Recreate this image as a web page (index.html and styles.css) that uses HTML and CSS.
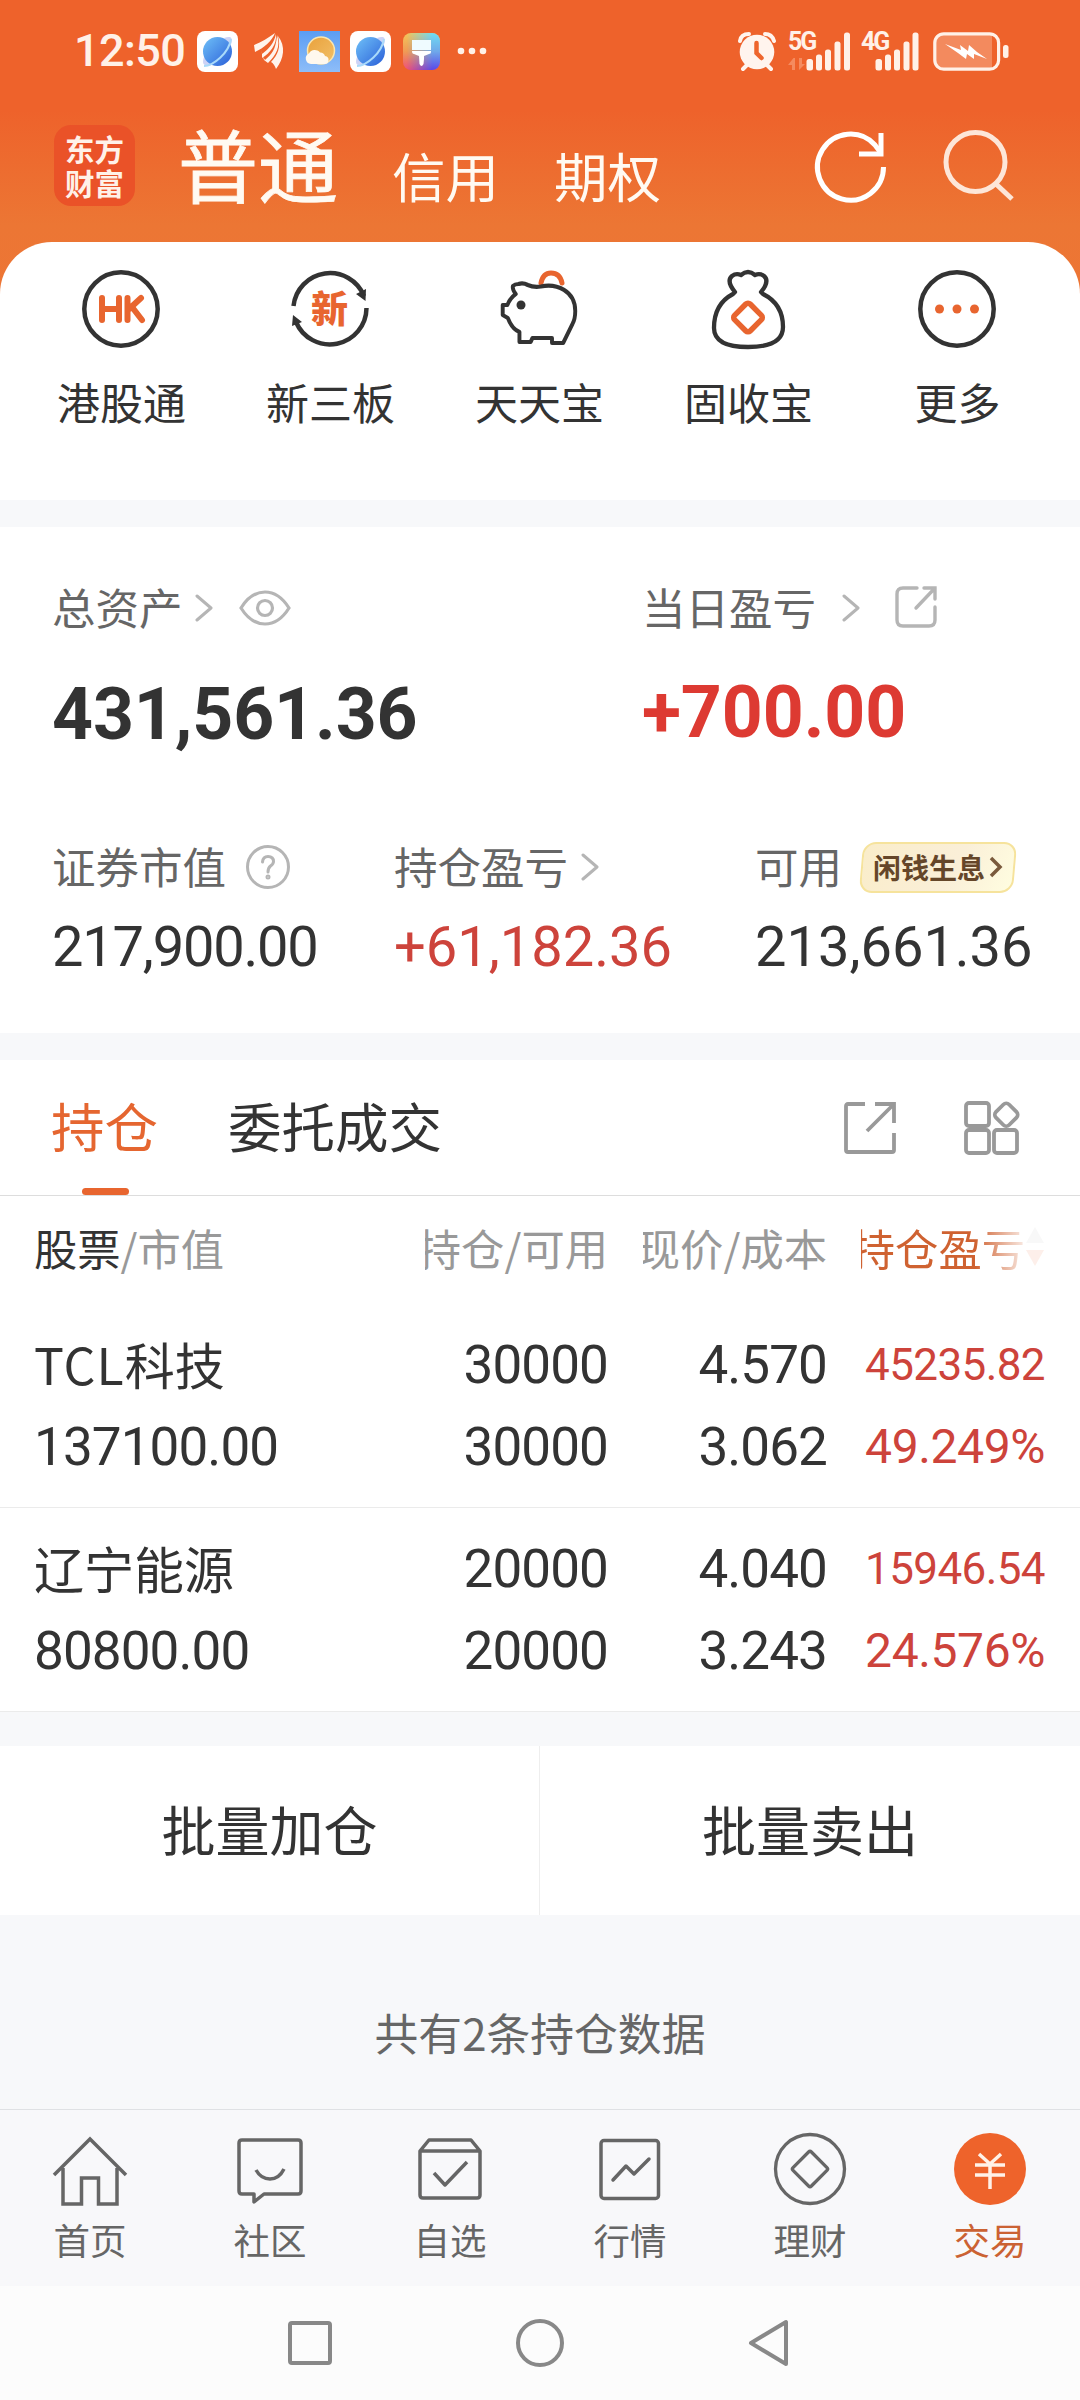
FILE: index.html
```html
<!DOCTYPE html>
<html lang="zh-CN">
<head>
<meta charset="utf-8">
<title>交易</title>
<link rel="stylesheet" href="styles.css">
</head>
<body>
<svg width="0" height="0" class="defs">
  <defs>
    <linearGradient id="ball" x1="0" y1="0" x2="1" y2="1"><stop offset="0" stop-color="#6fc0f8"/><stop offset="1" stop-color="#2a5fd8"/></linearGradient>
    <linearGradient id="sky" x1="0" y1="0" x2="0" y2="1"><stop offset="0" stop-color="#5b9df3"/><stop offset="1" stop-color="#8ebdf8"/></linearGradient>
    <linearGradient id="sun" x1="0" y1="0" x2="1" y2="1"><stop offset="0" stop-color="#e9a13b"/><stop offset="1" stop-color="#f2c069"/></linearGradient>
    <linearGradient id="coolside" x1="0" y1="0" x2="0" y2="1"><stop offset="0" stop-color="#6fdcf2"/><stop offset="0.5" stop-color="#6fa8ea"/><stop offset="1" stop-color="#5a48e8"/></linearGradient>
    <linearGradient id="warmside" x1="0" y1="0" x2="0" y2="1"><stop offset="0" stop-color="#f3c65a"/><stop offset="0.5" stop-color="#f09a55"/><stop offset="1" stop-color="#ec4f7c"/></linearGradient>
    <linearGradient id="fadein" x1="0" y1="0" x2="1" y2="0"><stop offset="0.1" stop-color="#fff" stop-opacity="0"/><stop offset="0.8" stop-color="#fff"/></linearGradient>
    <mask id="sidemask"><rect width="37" height="37" fill="url(#fadein)"/></mask>
    <symbol id="planet" viewBox="0 0 41 41">
      <rect width="41" height="41" rx="8" fill="#fff"/>
      <path d="M27 7C33 5 36 6 34.500 12L32 18zM7 26C4.500 33 7 36 14 34L18 32z" fill="#cdd3f6"/>
      <circle cx="20.500" cy="20.500" r="14.500" fill="url(#ball)"/>
      <path d="M7 35C16 35 32 22 34 8" fill="none" stroke="#a9dafa" stroke-width="2"/>
    </symbol>
    <symbol id="chevron" viewBox="0 0 18 28"><path d="M2 2L16 14L2 26" fill="none" stroke="#b5b5b5" stroke-width="3" stroke-linecap="round" stroke-linejoin="round"/></symbol>
  </defs>
</svg>
<div class="screen">
  <header class="top">
    <div class="status">
      <span class="clock">12:50</span>
      <svg class="app1" width="41" height="41"><use href="#planet"/></svg>
      <svg class="app2" width="30" height="36" viewBox="0 0 30 36" fill="#fff4ec"><path d="M0 12C8 9 14 5 21 0C18 8 10 15 1 19z"/><path d="M22 1C23 12 16 20 8 25L8 21C15 16 20 10 22 1z"/><path d="M7 17C9 22 9 25 11 27C17 22 22 17 23 2C27 14 22 22 14 30L10 27z"/><path d="M24 3C32 13 30 26 22 36C21 33 19 30 17 29C24 22 27 14 24 3z"/></svg>
      <svg class="app3" width="41" height="41" viewBox="0 0 41 41"><rect width="41" height="41" fill="url(#sky)"/><circle cx="22" cy="19.500" r="13.500" fill="url(#sun)" stroke="#fbe6ae" stroke-width="1.500"/><path d="M12 33a5.500 5.500 0 0 1-2-10.500a6.500 6.500 0 0 1 11-1a5 5 0 0 1 5 3.500a4 4 0 0 1-1 8z" fill="#fff8ee"/></svg>
      <svg class="app4" width="41" height="41"><use href="#planet"/></svg>
      <svg class="app5" width="37" height="37" viewBox="0 0 37 37"><rect width="37" height="37" rx="8" fill="url(#warmside)"/><rect width="37" height="37" rx="8" fill="url(#coolside)" mask="url(#sidemask)"/><path d="M9 7H28V17H9z" fill="#effbff"/><path d="M9 18H28V19Q28 21 26 21L21 23V26L20.500 31Q18.500 35 16.500 31L16 23L11 21Q9 21 9 18z" fill="#fff"/></svg>
      <svg class="more" width="30" height="8" viewBox="0 0 30 8" fill="#fff1e8"><circle cx="4" cy="4" r="3.300"/><circle cx="15" cy="4" r="3.300"/><circle cx="26" cy="4" r="3.300"/></svg>
      <svg class="alarm" width="38" height="39" viewBox="0 0 38 39"><circle cx="19" cy="20" r="17.300" fill="#fff4ee"/><path d="M2 9Q3 2 11 2M27 2Q34 2 36 9M9 33L5 37M29 33L33 37" stroke="#fff4ee" stroke-width="4" fill="none" stroke-linecap="round"/><path d="M18.500 11V21L23.500 26" fill="none" stroke="#ee652d" stroke-width="4.500" stroke-linecap="round"/></svg>
      <div class="signal"><span>5G</span><svg width="62" height="39" viewBox="0 0 62 39"><path d="M5.500 26L0 33H4V38H7V26zM11 26V38L17 32H14V26z" fill="#f58b5f"/><g fill="#fff1e8"><rect x="18.500" y="27" width="6.500" height="11.500" rx="2.500"/><rect x="28" y="22.500" width="6" height="16" rx="2.500"/><rect x="37" y="17.500" width="6" height="21" rx="2.500"/><rect x="46.500" y="9.500" width="6" height="29" rx="2.500"/><rect x="56" y="0.500" width="6" height="38" rx="2.500"/></g></svg></div>
      <div class="signal second"><span>4G</span><svg width="62" height="39" viewBox="0 0 62 39"><g fill="#fff1e8"><rect x="18.500" y="27" width="6.500" height="11.500" rx="2.500"/><rect x="28" y="22.500" width="6" height="16" rx="2.500"/><rect x="37" y="17.500" width="6" height="21" rx="2.500"/><rect x="46.500" y="9.500" width="6" height="29" rx="2.500"/><rect x="55.500" y="0.500" width="6" height="38" rx="2.500"/></g></svg></div>
      <svg class="battery" width="76" height="39" viewBox="0 0 76 39"><path d="M10 3H59V36H10Q3 36 3 29V10Q3 3 10 3z" fill="#f38a5e"/><rect x="1.800" y="1.800" width="63.800" height="35.400" rx="9" fill="none" stroke="#fff1e8" stroke-width="3.200"/><rect x="70" y="13" width="5.500" height="13" rx="2.500" fill="#fff1e8"/><path d="M12 12L28 18L27 13L35 19L36 13L44 20L54 27L41 22L41 27L34 22L33 27L25 21z" fill="#fff"/></svg>
    </div>
    <div class="titlebar">
      <div class="logo"><span>东方</span><span>财富</span></div>
      <span class="mode on">普通</span>
      <span class="mode credit">信用</span>
      <span class="mode option">期权</span>
      <svg class="refresh" width="74" height="76" viewBox="0 0 74 76" fill="none" stroke="#fff" stroke-width="5"><path d="M69.500 38A33 33 0 1 1 61 16L67 24"/><path d="M67 4V25H45"/></svg>
      <svg class="search" width="72" height="74" viewBox="0 0 72 74" fill="none" stroke="#fde6d8" stroke-width="5"><circle cx="33.500" cy="33" r="29.500"/><path d="M54 55L70 70"/></svg>
    </div>
  </header>

  <section class="shortcuts">
    <div class="shortcut"><svg width="78" height="80" viewBox="0 0 78 80"><ellipse cx="39" cy="40" rx="36.700" ry="36.700" fill="none" stroke="#333" stroke-width="4.500"/><path d="M20 29V51M37 29V51M20 40H37M45.500 29V51M59 29L46 41M50 38L60 51" stroke="#e8652f" stroke-width="6" stroke-linecap="round" fill="none"/></svg><span>港股通</span></div>
    <div class="shortcut"><div class="ring"><svg width="78" height="80" viewBox="0 0 78 80"><g fill="none" stroke="#333" stroke-width="4.500"><path d="M2.500 37A36.700 36.700 0 0 1 73 27"/><path d="M75.500 39A36.700 36.700 0 0 1 5 53"/></g><path d="M65 25L75 20L74.500 32zM1 57L2 46L11 53z" fill="#333"/></svg><b>新</b></div><span>新三板</span></div>
    <div class="shortcut"><svg width="78" height="80" viewBox="0 0 78 80" fill="none" stroke-linejoin="round"><path d="M41 14Q43 4 51 4Q60 4 62 14" stroke="#e8652f" stroke-width="5" stroke-linecap="round"/><path d="M14 15Q19 13.500 24 16Q30 18.500 38 17.500C55 14 75 22 75 42Q75 50 72 55L62 74H50V69H29L27 73H15V63Q7 60 2.500 49L-3 46V36H2Q5 29 11 25Q7 20 8 17Q10 15 14 15z" transform="matrix(.93 0 0 1 5.500 0)" stroke="#333" stroke-width="4.200"/><circle cx="21" cy="36" r="4.500" fill="#333"/></svg><span>天天宝</span></div>
    <div class="shortcut"><svg width="78" height="80" viewBox="0 0 78 80" fill="none" stroke-linejoin="round"><path d="M26 22Q17 11 23 6Q27 3 32 5Q39 -1 46 5Q51 3 55 6Q61 11 52 22L54 24Q74 34 74 57Q74 77 39 77Q5 77 5 58Q5 34 24 24z" transform="translate(0 1)" stroke="#333" stroke-width="4.300"/><rect x="28" y="37.500" width="22" height="22" rx="3" transform="rotate(45 39 48.500)" stroke="#e8652f" stroke-width="5.500"/></svg><span>固收宝</span></div>
    <div class="shortcut"><svg width="78" height="80" viewBox="0 0 78 80"><circle cx="39" cy="40" r="36.700" fill="none" stroke="#333" stroke-width="4.500"/><g fill="#e8652f"><circle cx="21.500" cy="40" r="4.500"/><circle cx="39" cy="40" r="4.500"/><circle cx="56.500" cy="40" r="4.500"/></g></svg><span>更多</span></div>
  </section>

  <section class="assets">
    <div class="pair">
      <div>
        <div class="label"><span>总资产</span><svg class="arr a1" width="18" height="28"><use href="#chevron"/></svg><svg class="eye" width="52" height="36" viewBox="0 0 52 36" fill="none" stroke="#b5b5b5" stroke-width="3.200"><path d="M2 18Q12 2 26 2Q40 2 50 18Q40 34 26 34Q12 34 2 18z"/><circle cx="26" cy="18" r="7.500"/></svg></div>
        <div class="total">431,561.36</div>
      </div>
      <div>
        <div class="label"><span>当日盈亏</span><svg class="arr a2" width="18" height="28"><use href="#chevron"/></svg><svg class="share" width="42" height="42" viewBox="0 0 42 42" fill="none" stroke="#b5b5b5" stroke-width="3.400" stroke-linecap="round"><path d="M22 2H8Q2 2 2 8V34Q2 40 8 40H34Q40 40 40 34V21M29 2H40V13M40 2L21 22"/></svg></div>
        <div class="total daily">+700.00</div>
      </div>
    </div>
    <div class="trio">
      <div>
        <div class="label"><span>证券市值</span><svg class="help" width="44" height="46" viewBox="0 0 44 46" fill="none" stroke="#b5b5b5" stroke-width="3"><circle cx="22" cy="23" r="20.500"/><path d="M16.500 18Q17 12.500 22 12.500Q27.500 12.500 27.500 17.500Q27.500 20 24.500 22Q22 24 22 28" stroke-linecap="round"/><circle cx="22" cy="33" r="1" /></svg></div>
        <div class="num n1">217,900.00</div>
      </div>
      <div>
        <div class="label"><span>持仓盈亏</span><svg class="arr a3" width="18" height="28"><use href="#chevron"/></svg></div>
        <div class="num n2 red">+61,182.36</div>
      </div>
      <div>
        <div class="label"><span>可用</span><div class="badge"><span>闲钱生息</span><svg width="14" height="20" viewBox="0 0 14 20" fill="none" stroke="#7a5a3c" stroke-width="3.500"><path d="M2 1L11 10L2 19"/></svg></div></div>
        <div class="num n3">213,661.36</div>
      </div>
    </div>
  </section>

  <section class="holdings">
    <div class="tabs">
      <div class="tab active">持仓</div>
      <div class="tab">委托成交</div>
      <svg class="export" width="52" height="52" viewBox="0 0 52 52" fill="none" stroke="#999" stroke-width="3.800"><path d="M21 2H4Q2 2 2 4V48Q2 50 4 50H48Q50 50 50 48V31M31 2H50V21M49 3L23 29"/></svg>
      <svg class="grid" width="58" height="56" viewBox="0 0 58 56" fill="none" stroke="#999" stroke-width="3.800"><rect x="3" y="3" width="23" height="23" rx="3"/><rect x="3" y="30" width="23" height="23" rx="3"/><rect x="31" y="30" width="23" height="23" rx="3"/><rect x="34" y="5.500" width="18.500" height="18.500" rx="4" transform="rotate(45 43.250 14.750)"/></svg>
    </div>
    <div class="row head">
      <div class="hc first"><b>股票</b><span>/市值</span></div>
      <div class="hc"><span>持仓/可用</span></div>
      <div class="hc"><span>现价/成本</span></div>
      <div class="hc sort"><span>持仓盈亏</span><svg width="20" height="40" viewBox="0 0 20 40"><path d="M10 0L19 16H1z" fill="#bbb"/><path d="M10 39L19 23H1z" fill="#e8652f"/></svg></div>
    </div>
    <div class="row item">
      <div class="first"><div class="name"><span class="latin">TCL</span>科技</div><div class="v">137100.00</div></div>
      <div><div class="v">30000</div><div class="v">30000</div></div>
      <div><div class="v">4.570</div><div class="v">3.062</div></div>
      <div class="red"><div class="p">45235.82</div><div class="q">49.249%</div></div>
    </div>
    <div class="row item">
      <div class="first"><div class="name">辽宁能源</div><div class="v">80800.00</div></div>
      <div><div class="v">20000</div><div class="v">20000</div></div>
      <div><div class="v">4.040</div><div class="v">3.243</div></div>
      <div class="red"><div class="p">15946.54</div><div class="q">24.576%</div></div>
    </div>
  </section>

  <section class="batch"><div>批量加仓</div><div>批量卖出</div></section>
  <div class="count">共有2条持仓数据</div>

  <nav class="bottom">
    <div><svg width="76" height="80" viewBox="0 0 76 80" fill="none" stroke="#666" stroke-width="3.500"><path d="M2 44L38 8L74 44M11 37V73H29.500V47H46.500V73H65V37"/></svg><span>首页</span></div>
    <div><svg width="76" height="80" viewBox="0 0 76 80" fill="none" stroke="#666" stroke-width="3.500" stroke-linejoin="round"><path d="M10 9H66Q69 9 69 12V60Q69 63 66 63H32L22 71V63H10Q7 63 7 60V12Q7 9 10 9z"/><path d="M24 39Q29 48 38 48Q47 48 52 38"/></svg><span>社区</span></div>
    <div><svg width="76" height="80" viewBox="0 0 76 80" fill="none" stroke="#666" stroke-width="3.500" stroke-linejoin="round"><path d="M8 20L17 9H59L68 20V64Q68 67 65 67H11Q8 67 8 64zM8 20H68"/><path d="M22 42L33 54L55 31"/></svg><span>自选</span></div>
    <div><svg width="76" height="80" viewBox="0 0 76 80" fill="none" stroke="#666" stroke-width="3.500" stroke-linejoin="round"><rect x="9" y="9.500" width="57.500" height="58" rx="3"/><path d="M21 49L34 35L42 43L57 28" stroke-linecap="round"/></svg><span>行情</span></div>
    <div><svg width="76" height="80" viewBox="0 0 76 80" fill="none" stroke="#666" stroke-width="3.300"><circle cx="38" cy="38" r="34.500"/><rect x="25" y="25" width="26" height="26" rx="2" transform="rotate(45 38 38)"/></svg><span>理财</span></div>
    <div class="now"><svg width="76" height="80" viewBox="0 0 76 80" fill="none" stroke="#fff1e8" stroke-width="3.500"><circle cx="38" cy="38" r="36" fill="#ee632b" stroke="none"/><path d="M27 23L38 33L49 23M23 34H53M23 44H53M38 32V58"/></svg><span>交易</span></div>
  </nav>
  <div class="sysnav">
    <svg width="46" height="48" viewBox="0 0 46 48"><rect x="3" y="4" width="40" height="40" rx="2" fill="none" stroke="#888" stroke-width="4"/></svg>
    <svg width="50" height="50" viewBox="0 0 50 50"><circle cx="25" cy="25" r="22" fill="none" stroke="#888" stroke-width="4"/></svg>
    <svg width="46" height="50" viewBox="0 0 46 50"><path d="M4 25L39 4V46z" fill="none" stroke="#888" stroke-width="4" stroke-linejoin="round"/></svg>
  </div>
</div>
</body>
</html>
```
FILE: styles.css
```css
* { box-sizing: border-box; margin: 0; padding: 0; }
body { width: 1080px; background: #f7f8fa; color: #333; font-family: "Noto Sans CJK SC", sans-serif; }
svg { display: block; flex: none; overflow: visible; }
.defs { position: absolute; }
.screen { width: 1080px; height: 2400px; display: flex; flex-direction: column; overflow: hidden; }
.screen > * { flex: none; }

.top { height: 302px; background: linear-gradient(#ee622b 0, #ee622b 110px, #ec7634 225px, #ed7535 302px); }
.status { height: 102px; padding-left: 74px; display: flex; align-items: center; }
.clock { width: 114px; font: 500 45px/60px Roboto, sans-serif; color: #fff1e8; letter-spacing: -0.6px; }
.app1 { margin-left: 9px; }
.app2 { margin-left: 16px; }
.app3 { margin-left: 15px; }
.app4 { margin-left: 10px; }
.app5 { margin-left: 12px; }
.more { margin-left: 17px; }
.alarm { margin-left: 251px; }
.signal { position: relative; width: 62px; margin-left: 12px; }
.signal.second { margin-left: 7px; }
.signal span { position: absolute; left: 0; top: -3px; font: 700 25px/26px Roboto, sans-serif; letter-spacing: -2px; color: #fff1e8; }
.second span { left: 4px; }
.battery { margin-left: 14px; }

.titlebar { height: 140px; padding-left: 54px; display: flex; align-items: flex-start; color: #fffaf2; white-space: nowrap; }
.logo { width: 81px; height: 81px; margin-top: 23px; padding-top: 6px; border-radius: 17px; background: #ea5228; text-align: center; font-weight: 700; font-size: 29.5px; line-height: 34px; color: #fff1e8; }
.logo span { display: block; height: 34px; }
.mode { font-size: 53.5px; line-height: 80px; margin-top: 33px; }
.mode.on { width: 160px; margin-left: 43px; margin-top: 17px; font-size: 80px; line-height: 86px; -webkit-text-stroke: 0.8px #fffaf2; }
.mode.credit { margin-left: 54px; width: 107px; }
.mode.option { margin-left: 55px; width: 107px; }
.refresh { margin: 27px 0 0 153px; }
.search { margin: 27px 0 0 54px; }

.shortcuts { height: 258px; margin-top: -60px; padding: 27px 17px 0 16px; background: #fff; border-radius: 52px 52px 0 0; display: grid; grid-template-columns: repeat(5, 209px); }
.shortcut { display: flex; flex-direction: column; align-items: center; }
.shortcut span { margin-top: 22px; font-size: 43px; line-height: 60px; position: relative; left: 1px; }
.ring { position: relative; }
.ring b { position: absolute; left: 0; top: 0; width: 78px; text-align: center; font-size: 37px; line-height: 76px; font-weight: 900; color: #e8652f; }

.assets { height: 506px; margin-top: 27px; background: #fff; white-space: nowrap; }
.pair { height: 262px; padding: 51px 0 0 52px; display: grid; grid-template-columns: 590px 1fr; }
.label { height: 60px; display: flex; align-items: center; font-size: 43.5px; line-height: 60px; color: #666; }
.label > span { margin-top: -2px; }
.a1 { margin-left: 12px; }
.eye { margin-left: 26px; }
.a2 { margin-left: 26px; }
.share { margin-left: 35px; margin-top: -3px; }
.a3 { margin-left: 13px; }
.help { margin-left: 20px; }
.total { margin-top: 37px; font: 700 71.5px/80px Roboto, sans-serif; letter-spacing: -0.1px; }
.daily { margin-top: 35px; color: #dd3a32; }
.trio { padding: 48px 0 0 52px; display: grid; grid-template-columns: 342px 361px 1fr; }
.num { margin-top: 18px; font: 400 56px/64px Roboto, sans-serif; }
.n1 { letter-spacing: -1.2px; }
.red { color: #cd433b; }
.badge { position: relative; z-index: 0; width: 158px; height: 51px; margin-left: 17px; padding-left: 14px; display: flex; align-items: center; }
.badge::before { content: ""; position: absolute; z-index: -1; inset: 0 2px; transform: skewX(-5deg); border: 2px solid #f6e39c; border-radius: 13px; background: linear-gradient(115deg, #faedca, #faefd8 60%, #fffde0); }
.badge span { font-size: 28px; line-height: 40px; font-weight: 700; color: #654629; margin-right: 4px; }

.holdings { margin-top: 27px; background: #fff; }
.tabs { height: 136px; padding-left: 51px; display: flex; align-items: center; border-bottom: 1px solid #ddd; font-size: 53.5px; }
.tab { height: 135px; line-height: 130px; margin-right: 70px; white-space: nowrap; }
.active { color: #e56630; position: relative; }
.active::after { content: ""; position: absolute; left: 31px; bottom: 0; width: 47px; height: 7px; border-radius: 4px; background: #e8652f; }
.export { margin-left: 332px; }
.grid { margin-left: 67px; }
.row { padding: 0 35px; display: grid; grid-template-columns: 355px 183px 184px 184px; column-gap: 35px; text-align: right; white-space: nowrap; }
.row > :last-child { margin-left: -1px; margin-right: 1px; }
.row .first { text-align: left; margin-left: -1px; }
.head { height: 110px; padding-top: 21px; }
.hc { height: 60px; display: flex; align-items: center; justify-content: flex-end; overflow: hidden; font-size: 43.3px; line-height: 60px; color: #999; }
.hc.first { justify-content: flex-start; }
.hc b { font-weight: 400; color: #333; }
.sort { color: #cf6231; -webkit-mask-image: linear-gradient(to right, #000 62%, rgba(0,0,0,.35) 82%, rgba(0,0,0,.1) 90%); mask-image: linear-gradient(to right, #000 62%, rgba(0,0,0,.35) 82%, rgba(0,0,0,.1) 90%); }
.item { height: 202px; padding-top: 18px; border-bottom: 1px solid #ebebeb; }
.item + .item { height: 204px; padding-top: 20px; }
.item div > div { height: 82px; line-height: 82px; }
.item div > .name { font-size: 50px; line-height: 78px; }
.latin { letter-spacing: 1px; }
.v { font-family: Roboto, sans-serif; font-size: 53px; letter-spacing: -0.9px; }
.p { font-family: Roboto, sans-serif; font-size: 44px; letter-spacing: -0.6px; }
.q { font-family: Roboto, sans-serif; font-size: 48px; letter-spacing: -0.4px; }

.batch { height: 169px; margin-top: 34px; background: #fff; display: grid; grid-template-columns: 1fr 1fr; text-align: center; font-size: 54px; line-height: 166px; }
.batch div:first-child { border-right: 1px solid #eee; }
.count { height: 194px; padding-top: 87px; text-align: center; font-size: 43.8px; line-height: 60px; color: #666; }
.bottom { height: 177px; border-top: 1px solid #dfe1e4; background: #f8f8fa; display: grid; grid-template-columns: repeat(6, 1fr); }
.bottom div { padding-top: 21px; display: flex; flex-direction: column; align-items: center; color: #666; font-size: 36.5px; line-height: 50px; }
.bottom span { margin-top: 4px; }
.bottom .now { color: #cb6233; }
.sysnav { height: 114px; background: #fcfcfc; display: flex; justify-content: center; align-items: center; gap: 182px; }
```
